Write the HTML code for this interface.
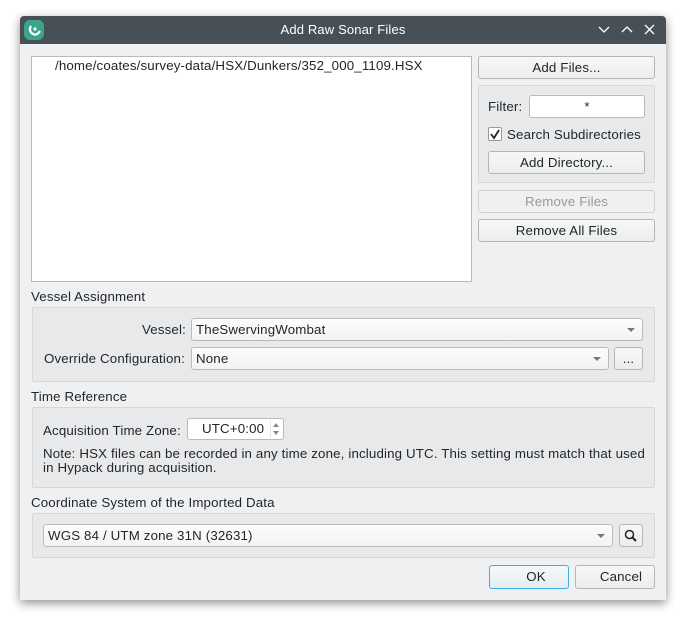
<!DOCTYPE html><html><head><style>
*{box-sizing:border-box}
body{margin:0;width:686px;height:624px;background:#fff;font-family:"Liberation Sans","DejaVu Sans",sans-serif;font-size:13.3px;letter-spacing:0.15px;color:#232629;position:relative;overflow:hidden}
.a{position:absolute}
.win{left:20px;top:16px;width:646px;height:584px;background:#eff0f1;box-shadow:0 3px 10px rgba(0,0,0,.45);border-radius:4px 4px 0 0}
.tb{left:20px;top:16px;width:646px;height:28px;background:#475057;color:#fff;border-radius:4px 4px 0 0;text-align:center;line-height:28px;font-size:13px}
.btn{position:absolute;border:1px solid #b3b5b7;border-radius:3px;background:linear-gradient(#f6f7f7,#eceded);text-align:center;line-height:21px}
.grp{position:absolute;border:1px solid #d5d7d9;border-radius:2px;background:#e8e9ea}
.inp{position:absolute;background:#fff;border:1px solid #b8babc;border-radius:3px;line-height:21px;padding-left:4px}
.cb{position:absolute;border:1px solid #b8babc;border-radius:3px;background:linear-gradient(#fcfcfc,#f2f3f3);line-height:21px;padding-left:4px}
.arr{position:absolute;right:7px;top:9px;width:0;height:0;border-left:4px solid transparent;border-right:4px solid transparent;border-top:4px solid #777}
.lbl{position:absolute;line-height:16px}
</style></head><body>
<div class="a win"></div>
<div class="a tb">Add Raw Sonar Files</div>
<div class="a" style="left:24px;top:20px;width:20px;height:20px;border-radius:6px;background:#3aa58a"></div>
<svg class="a" style="left:24px;top:20px" width="20" height="20"><path d="M7 6 Q4 11 9 14 Q13 16 16 11" stroke="#fff" stroke-width="2.2" fill="none"/><circle cx="11" cy="9" r="1.6" fill="#fff"/></svg>
<svg class="a" style="left:596px;top:22px" width="62" height="16" stroke="#fff" stroke-width="1.3" fill="none"><path d="M3 5 L8 10 L13 5"/><path d="M26 10 L31 5 L36 10"/><path d="M49 3 L58 12 M58 3 L49 12"/></svg>
<div class="a" style="left:31px;top:56px;width:441px;height:226px;background:#fff;border:1px solid #b8babc"></div>
<div class="lbl" style="left:55px;top:58px">/home/coates/survey-data/HSX/Dunkers/352_000_1109.HSX</div>
<div class="btn" style="left:478px;top:56px;width:177px;height:23px">Add Files...</div>
<div class="grp" style="left:478px;top:85px;width:177px;height:98px"></div>
<div class="lbl" style="left:488px;top:99px">Filter:</div>
<div class="inp" style="left:529px;top:95px;width:116px;height:23px;text-align:center;padding:0">*</div>
<div class="a" style="left:488px;top:127px;width:14px;height:14px;border:1px solid #999;background:#fff;border-radius:2px"></div>
<svg class="a" style="left:488px;top:127px" width="14" height="14"><path d="M3 7 L6 11 L11 3" stroke="#222" stroke-width="1.8" fill="none"/></svg>
<div class="lbl" style="left:507px;top:127px">Search Subdirectories</div>
<div class="btn" style="left:488px;top:151px;width:157px;height:23px">Add Directory...</div>
<div class="btn" style="left:478px;top:190px;width:177px;height:23px;color:#999;border-color:#cfd1d2;background:#eff0f1">Remove Files</div>
<div class="btn" style="left:478px;top:219px;width:177px;height:23px">Remove All Files</div>
<div class="lbl" style="left:31px;top:289px">Vessel Assignment</div>
<div class="grp" style="left:32px;top:307px;width:623px;height:75px"></div>
<div class="lbl" style="left:142px;top:322px">Vessel:</div>
<div class="cb" style="left:191px;top:318px;width:452px;height:23px">TheSwervingWombat<div class="arr"></div></div>
<div class="lbl" style="left:44px;top:351px">Override Configuration:</div>
<div class="cb" style="left:191px;top:347px;width:418px;height:23px">None<div class="arr"></div></div>
<div class="btn" style="left:614px;top:347px;width:29px;height:23px">...</div>
<div class="lbl" style="left:31px;top:389px">Time Reference</div>
<div class="grp" style="left:32px;top:407px;width:623px;height:81px"></div>
<div class="lbl" style="left:43px;top:423px">Acquisition Time Zone:</div>
<div class="inp" style="left:187px;top:418px;width:97px;height:22px;padding-left:14px;line-height:20px">UTC+0:00</div>
<svg class="a" style="left:270px;top:420px" width="12" height="18"><path d="M3 7 L6 3 L9 7Z M3 11 L6 15 L9 11Z" fill="#888"/><path d="M0 0 V18" stroke="#ccc"/></svg>
<div class="lbl" style="left:43px;top:447px;line-height:14px;width:602px">Note: HSX files can be recorded in any time zone, including UTC. This setting must match that used in Hypack during acquisition.</div>
<div class="lbl" style="left:31px;top:495px">Coordinate System of the Imported Data</div>
<div class="grp" style="left:32px;top:513px;width:623px;height:45px"></div>
<div class="cb" style="left:43px;top:524px;width:570px;height:23px">WGS 84 / UTM zone 31N (32631)<div class="arr"></div></div>
<div class="btn" style="left:619px;top:524px;width:24px;height:23px"></div>
<svg class="a" style="left:623px;top:528px" width="16" height="16"><circle cx="6.5" cy="6.5" r="4" stroke="#222" stroke-width="1.5" fill="none"/><path d="M9.5 9.5 L13 13" stroke="#222" stroke-width="2"/></svg>
<div class="btn" style="left:489px;top:565px;width:80px;height:24px;border-color:#3daee9;background:linear-gradient(#f3f8fb,#e6eef3);line-height:22px;padding-left:14px">OK</div>
<div class="btn" style="left:575px;top:565px;width:80px;height:24px;line-height:22px;padding-left:12px">Cancel</div>
</body></html>
